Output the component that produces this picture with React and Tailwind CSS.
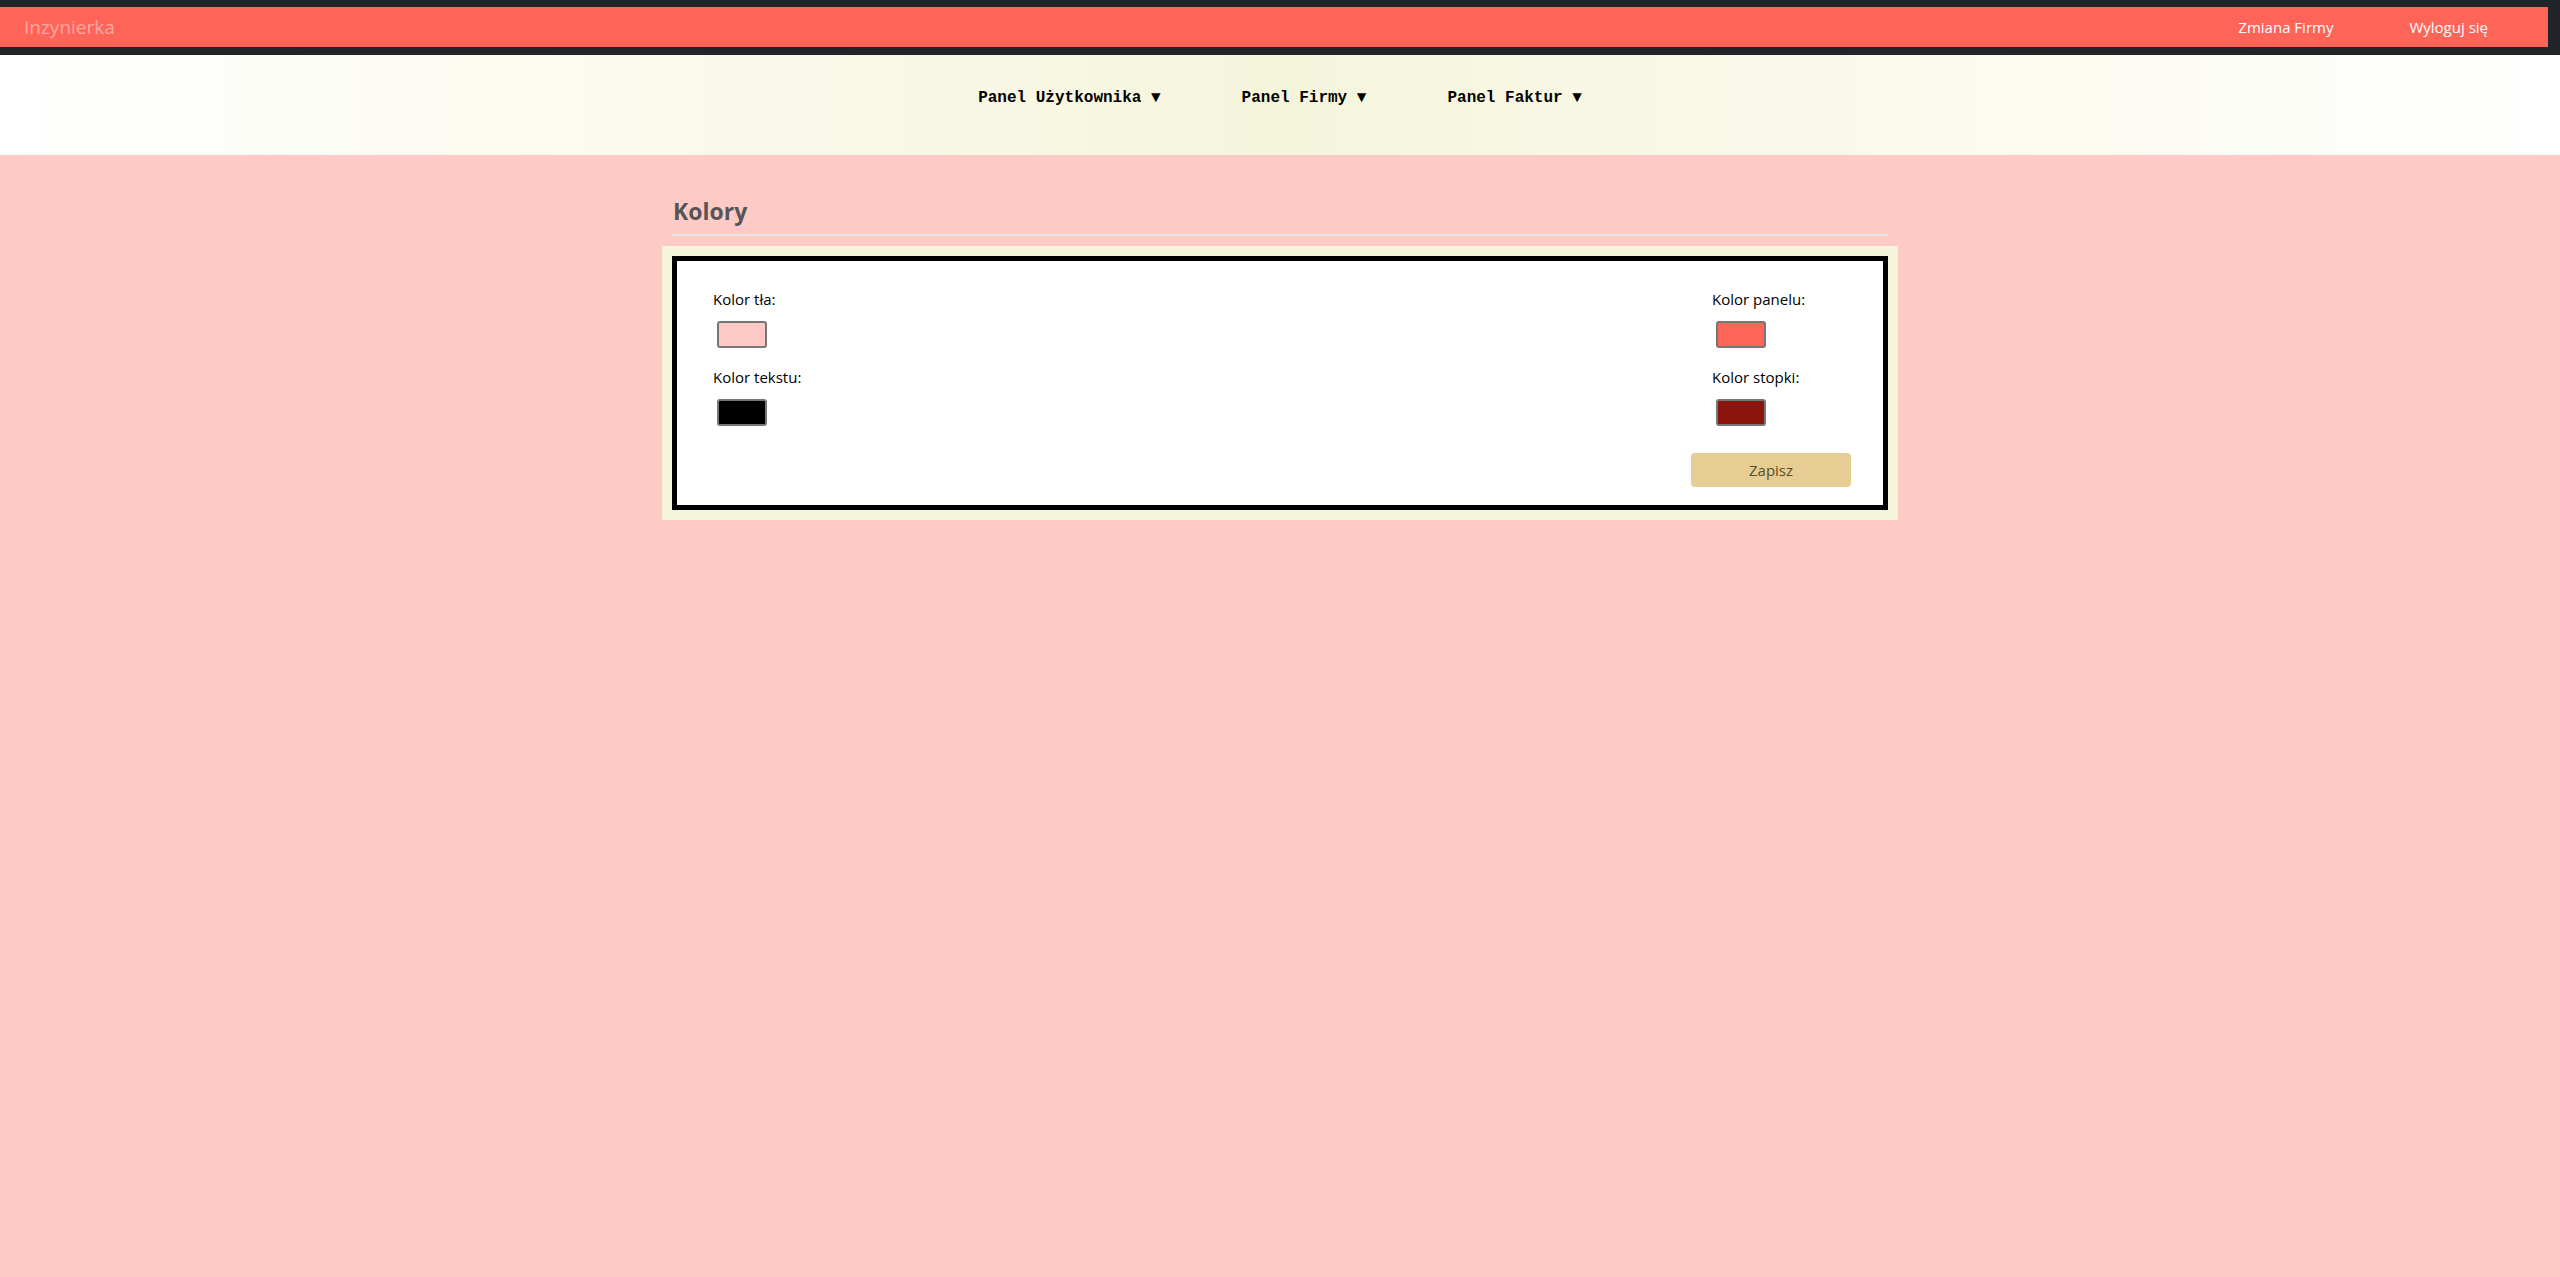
import React from "react";

const sans = { fontFamily: '"Open Sans", "Noto Sans", sans-serif' };

function Swatch({ color }) {
  return (
    <div
      className="ml-[4px] w-[50px] h-[27px] rounded-[3px] border-2 border-[#767676]"
      style={{ backgroundColor: color }}
    />
  );
}

function ColorField({ label, color, className = "" }) {
  return (
    <div className={className}>
      <p className="text-[15px] leading-[20px] text-black">{label}</p>
      <div className="mt-[12px]">
        <Swatch color={color} />
      </div>
    </div>
  );
}

function TopBar() {
  return (
    <nav className="bg-[#212529] pt-[7px] pb-[8px] pr-[12px]">
      <div className="h-[40px] bg-[#ff6459] flex items-center justify-between pl-[24px] pr-[60px]">
        <span className="text-[19px] text-[#ffa7a0]">Inzynierka</span>
        <div className="flex items-center gap-[76px] text-[15px] text-white">
          <a href="#">Zmiana Firmy</a>
          <a href="#">Wyloguj się</a>
        </div>
      </div>
    </nav>
  );
}

function MenuBar() {
  const items = ["Panel Użytkownika", "Panel Firmy", "Panel Faktur"];
  return (
    <div className="h-[100px] bg-[linear-gradient(to_right,#ffffff,#f5f5dc,#ffffff)] flex items-center justify-center pb-[14px]">
      <ul className="flex gap-[81px] font-['Liberation_Mono',monospace] font-bold text-[16px] leading-[20px] text-black">
        {items.map((item) => (
          <li key={item} className="cursor-pointer">
            {item} ▼
          </li>
        ))}
      </ul>
    </div>
  );
}

export default function App() {
  return (
    <div className="min-h-screen bg-[#ffcac6]" style={sans}>
      <TopBar />
      <MenuBar />
      <main className="w-[1236px] mx-auto pt-[42px]">
        <div className="mx-[10px] border-b-2 border-[#e6e4e3] pb-[8px]">
          <h2 className="text-[23px] leading-[29px] font-bold text-[#555555] pl-[1px]">
            Kolory
          </h2>
        </div>
        <div className="mt-[10px] bg-[#f5f5dc] p-[10px]">
          <div className="border-[5px] border-black bg-white pt-[28px] pb-[18px] pl-[36px] pr-[32px]">
            <div className="flex justify-between">
              <div>
                <ColorField label="Kolor tła:" color="#ffcac6" />
                <ColorField label="Kolor tekstu:" color="#000000" className="mt-[19px]" />
              </div>
              <div className="w-[139px]">
                <ColorField label="Kolor panelu:" color="#ff6459" />
                <ColorField label="Kolor stopki:" color="#8b150c" className="mt-[19px]" />
              </div>
            </div>
            <div className="flex justify-end mt-[27px]">
              <button className="w-[160px] h-[34px] rounded-[4px] bg-[#e6cd94] text-[15px] text-[#5b4f26]">
                Zapisz
              </button>
            </div>
          </div>
        </div>
      </main>
    </div>
  );
}
